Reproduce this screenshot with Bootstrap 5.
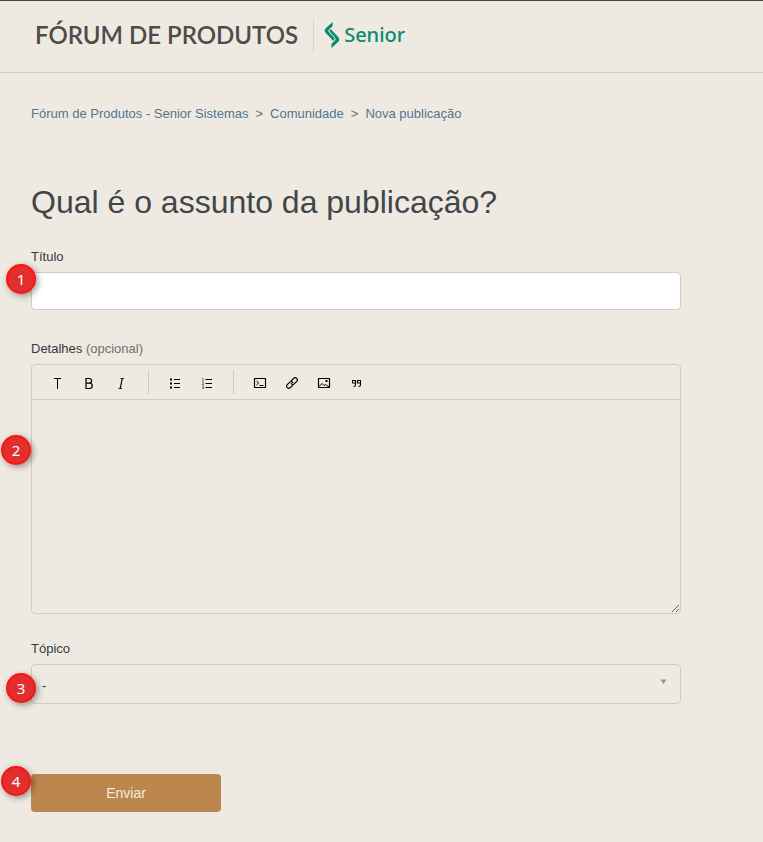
<!DOCTYPE html>
<html lang="pt-BR">
<head>
<meta charset="utf-8">
<meta name="viewport" content="width=device-width, initial-scale=1">
<title>Nova publicação – Fórum de Produtos</title>
<link href="https://cdn.jsdelivr.net/npm/bootstrap@5.3.0/dist/css/bootstrap.min.css" rel="stylesheet">
<style>
  body { background: #eeeae1; color: #40464a; font: 13px/20px "Liberation Sans", Arial, sans-serif; }
  .site-header { border-top: 1px solid #46424c; border-bottom: 1px solid #d5cfc1; padding: 16px 35px 19px; }
  .brand-title { font: 600 24px/36px Lato, sans-serif; color: #4c4c4a; }
  .brand-rule { width: 1px; height: 35px; background: #d9d6ce; margin: 0 10px 0 15px; }
  .brand-name { font: 500 20px/36px "Noto Sans", sans-serif; color: #0a8a70; margin-left: 4px; }
  .page-main { padding: 31px 31px 30px; }
  .crumbs { --bs-breadcrumb-divider: ">"; --bs-breadcrumb-divider-color: #6b6f70; --bs-breadcrumb-item-padding-x: 7px; margin-bottom: 56px; font-size: 13px; }
  .crumbs a { color: #4f7692; }
  .page-title { font-size: 32px; line-height: 44px; font-weight: 400; margin-bottom: 22px; color: #40464a; }
  .post-form { max-width: 650px; }
  .field-label { display: block; line-height: 22px; margin-bottom: 4px; color: #35393c; }
  .optional { color: #6d7070; }
  .boxed { border: 1px solid #d2ccbd; border-radius: 4px; background-color: transparent; }
  .boxed.title-input { height: 38px; background: #fff; font-size: 13px; padding: 8px 10px; }
  .editor { overflow: hidden; }
  .tools { height: 35px; border-bottom: 1px solid #d2ccbd; padding-left: 9px; }
  .tool { width: 32px; height: 32px; padding: 0; border: 0; background: none; color: #000; }
  .tool-rule { width: 1px; height: 24px; background: #d2ccbd; margin: 0 10px; }
  .tool-rule:first-of-type { margin-left: 11px; }
  .editor-text { display: block; width: 100%; height: 213px; border: 0; background: none; padding: 10px; resize: vertical; }
  .boxed.topic { height: 40px; padding: 3px 9px 0 10px; font-size: 13px; color: #35393c; background-image: none; }
  .arrow { position: absolute; right: 14px; top: 15px; pointer-events: none; }
  .send-row { margin-top: 70px; }
  .send { width: 190px; height: 38px; padding: 0; font-size: 14px; line-height: 38px; border: 0; border-radius: 4px; color: #f3ece0; background: #bb874e; }
  .send:hover { background: #a87742; color: #fff; }
  .step { position: absolute; left: -25px; width: 30px; height: 30px; border: 2px solid #ff1212; border-radius: 50%; background: #e12f30; color: #fff; font: 15px/26px "Noto Sans", sans-serif; text-align: center; box-shadow: 2px 2px 6px rgba(0,0,0,.4); z-index: 2; }
  .step-far { left: -30px; }
  .step-1 { top: -8px; } .step-2 { top: 71px; } .step-3 { top: 9px; } .step-4 { top: -8px; }
</style>
<script defer src="https://cdn.jsdelivr.net/npm/bootstrap@5.3.0/dist/js/bootstrap.bundle.min.js"></script>
</head>
<body>
<header class="site-header">
  <a href="#" class="d-inline-flex align-items-center text-decoration-none align-top">
    <span class="brand-title">FÓRUM DE PRODUTOS</span>
    <span class="brand-rule"></span>
    <svg width="16" height="28" viewBox="0 0 16 28" fill="#0a8a70" aria-hidden="true">
      <path d="M8.600 1v4L5 8.600c-.8.8-.8 1.500-.1 2.300l5 5.200c1 1.200.8 2.600-.6 4L3 13.300C.1 10.200 0 8.700 2.500 6.400Z"/>
      <path d="M7.400 27v-4l3.600-3.600c.8-.8.8-1.500.1-2.300l-5-5.200c-1-1.200-.8-2.600.6-4L13 14.700c2.900 3.100 3 4.600.5 6.900Z"/>
      <path d="m5.300 10.600 5.400 6.200" fill="none" stroke="#eeeae1" stroke-width="1"/>
    </svg>
    <span class="brand-name">Senior</span>
  </a>
</header>

<main class="page-main">
  <nav aria-label="Trilha de navegação">
    <ol class="breadcrumb crumbs">
      <li class="breadcrumb-item"><a class="text-decoration-none" href="#">Fórum de Produtos - Senior Sistemas</a></li>
      <li class="breadcrumb-item"><a class="text-decoration-none" href="#">Comunidade</a></li>
      <li class="breadcrumb-item"><a class="text-decoration-none" href="#">Nova publicação</a></li>
    </ol>
  </nav>
  <h1 class="page-title">Qual é o assunto da publicação?</h1>

  <form class="post-form">
    <label class="field-label" for="titulo">Título</label>
    <div class="position-relative mb-4 pb-1">
      <input type="text" id="titulo" class="form-control boxed title-input">
      <span class="step step-1">1</span>
    </div>

    <label class="field-label" for="detalhes">Detalhes <span class="optional">(opcional)</span></label>
    <div class="position-relative mb-4">
      <div class="boxed editor">
        <div class="tools d-flex align-items-center" role="toolbar" aria-label="Formatação">
          <button type="button" class="tool" aria-label="Estilo do texto"><svg width="14" height="14" fill="none" stroke="currentColor"><path d="M4 2.500h7M7.500 2.500V13"/></svg></button>
          <button type="button" class="tool" aria-label="Negrito"><svg width="14" height="14" fill="none" stroke="currentColor" stroke-width="1.200"><path d="M4 2.500h3.200c3.200 0 3.200 4.700 0 4.700H4h3.500c3.900 0 3.700 5.300 0 5.300H4Z"/></svg></button>
          <button type="button" class="tool" aria-label="Itálico"><svg width="14" height="14" fill="none" stroke="currentColor" stroke-width=".8"><path d="M6.500 2.500h3.500M4.500 12.500H8"/><path d="M8.300 2.500 6.200 12.500" stroke-width="1.200"/></svg></button>
          <span class="tool-rule"></span>
          <button type="button" class="tool" aria-label="Lista com marcadores"><svg width="14" height="14" fill="none" stroke="currentColor"><path d="M6 3.500h6M6 7.500h6M6 11.500h6"/><path d="M2 3.500h2M2 7.500h2M2 11.500h2" stroke-width="2"/></svg></button>
          <button type="button" class="tool" aria-label="Lista numerada"><svg width="14" height="14" fill="none" stroke="currentColor"><path d="M5.500 3.500H12M5.500 7.500H12M5.500 11.500H12"/><path d="M2 2.300h1V5M2 5.200h2M2 6.700h1.500v1L2 8.700h2M2 10h1.500v2.500H2M2.500 11.200h1" stroke-width=".7" stroke="#555"/></svg></button>
          <span class="tool-rule"></span>
          <button type="button" class="tool" aria-label="Bloco de código"><svg width="14" height="14" fill="none" stroke="currentColor" stroke-width="1.200"><rect x="1.500" y="2.500" width="11" height="9" rx=".5"/><path d="m3.500 5 2.200 2-2.200 2M6.500 9.500h4" stroke-width="1"/></svg></button>
          <button type="button" class="tool" aria-label="Link"><svg width="14" height="14" viewBox="0 0 14 14" fill="none" stroke="currentColor" stroke-width="1.200"><path d="m6 5 2.700-2.700c2-2 5 1 3 3L9.300 7.800c-1 1-2.800.8-3.400-.7M8 9l-2.700 2.700c-2 2-5-1-3-3l2.400-2.500c1-1 2.800-.8 3.400.7"/></svg></button>
          <button type="button" class="tool" aria-label="Imagem"><svg width="14" height="14" fill="none" stroke="currentColor" stroke-width="1.200"><rect x="1.500" y="2.500" width="11" height="9" rx=".5"/><path d="m2 10.500 3-3 2 2 1.500-1 3.500 2.500" stroke-width="1"/><path d="M8.500 5h2" stroke-width="1.800"/></svg></button>
          <button type="button" class="tool" aria-label="Citação"><svg width="14" height="14" fill="none" stroke="currentColor" stroke-width="1.100"><path d="M6.500 7H3.500V4.500h3V9c0 1-.7 1.500-2 1.500M11.500 7h-3V4.500h3V9c0 1-.7 1.500-2 1.500"/></svg></button>
        </div>
        <textarea id="detalhes" class="editor-text"></textarea>
      </div>
      <span class="step step-far step-2">2</span>
    </div>

    <label class="field-label" for="topico">Tópico</label>
    <div class="position-relative">
      <select id="topico" class="form-select boxed topic"><option>-</option></select>
      <svg class="arrow" width="7" height="6" aria-hidden="true"><path d="M.5.500h6L3.500 5Z" fill="#97938a"/></svg>
      <span class="step step-3">3</span>
    </div>

    <div class="position-relative send-row">
      <button type="submit" class="btn send">Enviar</button>
      <span class="step step-far step-4">4</span>
    </div>
  </form>
</main>
</body>
</html>
